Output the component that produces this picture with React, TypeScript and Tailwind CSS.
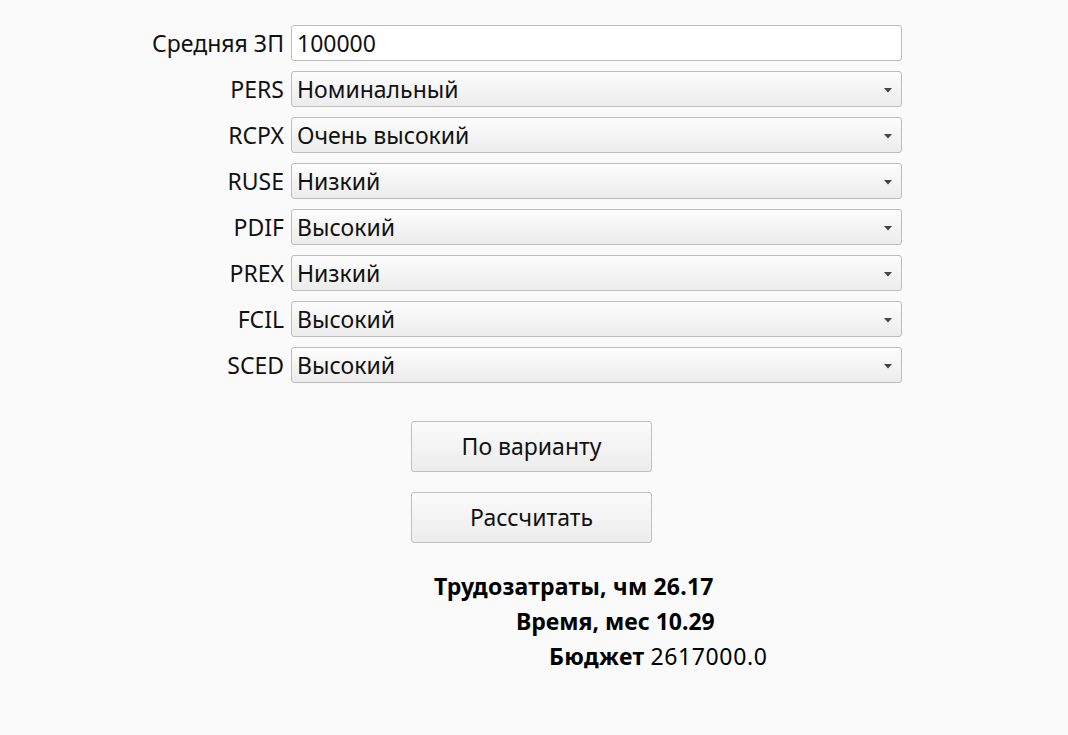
import React from "react";

const ROWS: [string, string][] = [
  ["PERS", "Номинальный"],
  ["RCPX", "Очень высокий"],
  ["RUSE", "Низкий"],
  ["PDIF", "Высокий"],
  ["PREX", "Низкий"],
  ["FCIL", "Высокий"],
  ["SCED", "Высокий"],
];

const Arrow = () => (
  <svg width="8" height="5" viewBox="0 0 8 5" className="absolute right-[9px] top-[16px]">
    <path d="M0 0 H8 L4 4.5 Z" fill="#444" />
  </svg>
);

const Row = ({ label, children }: { label: string; children: React.ReactNode }) => (
  <div className="flex items-center h-[36px]">
    <div className="w-[291px] pr-[7px] text-right">{label}</div>
    {children}
  </div>
);

export default function App() {
  return (
    <div
      className="w-[1068px] h-[735px] bg-[#fafafa] text-[#111] text-[23px] pt-[25px]"
      style={{ fontFamily: '"Noto Sans", "Open Sans", sans-serif' }}
    >
      <div className="flex flex-col gap-[10px]">
        <Row label="Средняя ЗП">
          <div className="w-[611px] h-[36px] bg-white border border-[#bdbdbd] rounded-[3px] pl-[5px] flex items-center">
            100000
          </div>
        </Row>
        {ROWS.map(([l, v]) => (
          <Row key={l} label={l}>
            <div className="relative w-[611px] h-[36px] bg-gradient-to-b from-[#fdfdfd] to-[#ececec] border border-[#bdbdbd] rounded-[3px] pl-[5px] flex items-center">
              {v}
              <Arrow />
            </div>
          </Row>
        ))}
      </div>

      <div className="flex flex-col items-start pl-[411px] mt-[38px] gap-[20px]">
        <button className="w-[241px] h-[51px] bg-gradient-to-b from-[#fbfbfb] to-[#ececec] border border-[#c0c0c0] rounded-[3px]">
          По варианту
        </button>
        <button className="w-[241px] h-[51px] bg-gradient-to-b from-[#fbfbfb] to-[#ececec] border border-[#c0c0c0] rounded-[3px]">
          Рассчитать
        </button>
      </div>

      <div className="flex flex-col items-start mt-[26px] font-bold leading-[35px] text-black">
        <div className="ml-[434px] tracking-[0.2px]">Трудозатраты, чм 26.17</div>
        <div className="ml-[516px]">Время, мес 10.29</div>
        <div className="ml-[549px]">
          <span className="tracking-[0.4px]">Бюджет</span>{" "}
          <span className="font-normal tracking-[0.6px]">2617000.0</span>
        </div>
      </div>
    </div>
  );
}
